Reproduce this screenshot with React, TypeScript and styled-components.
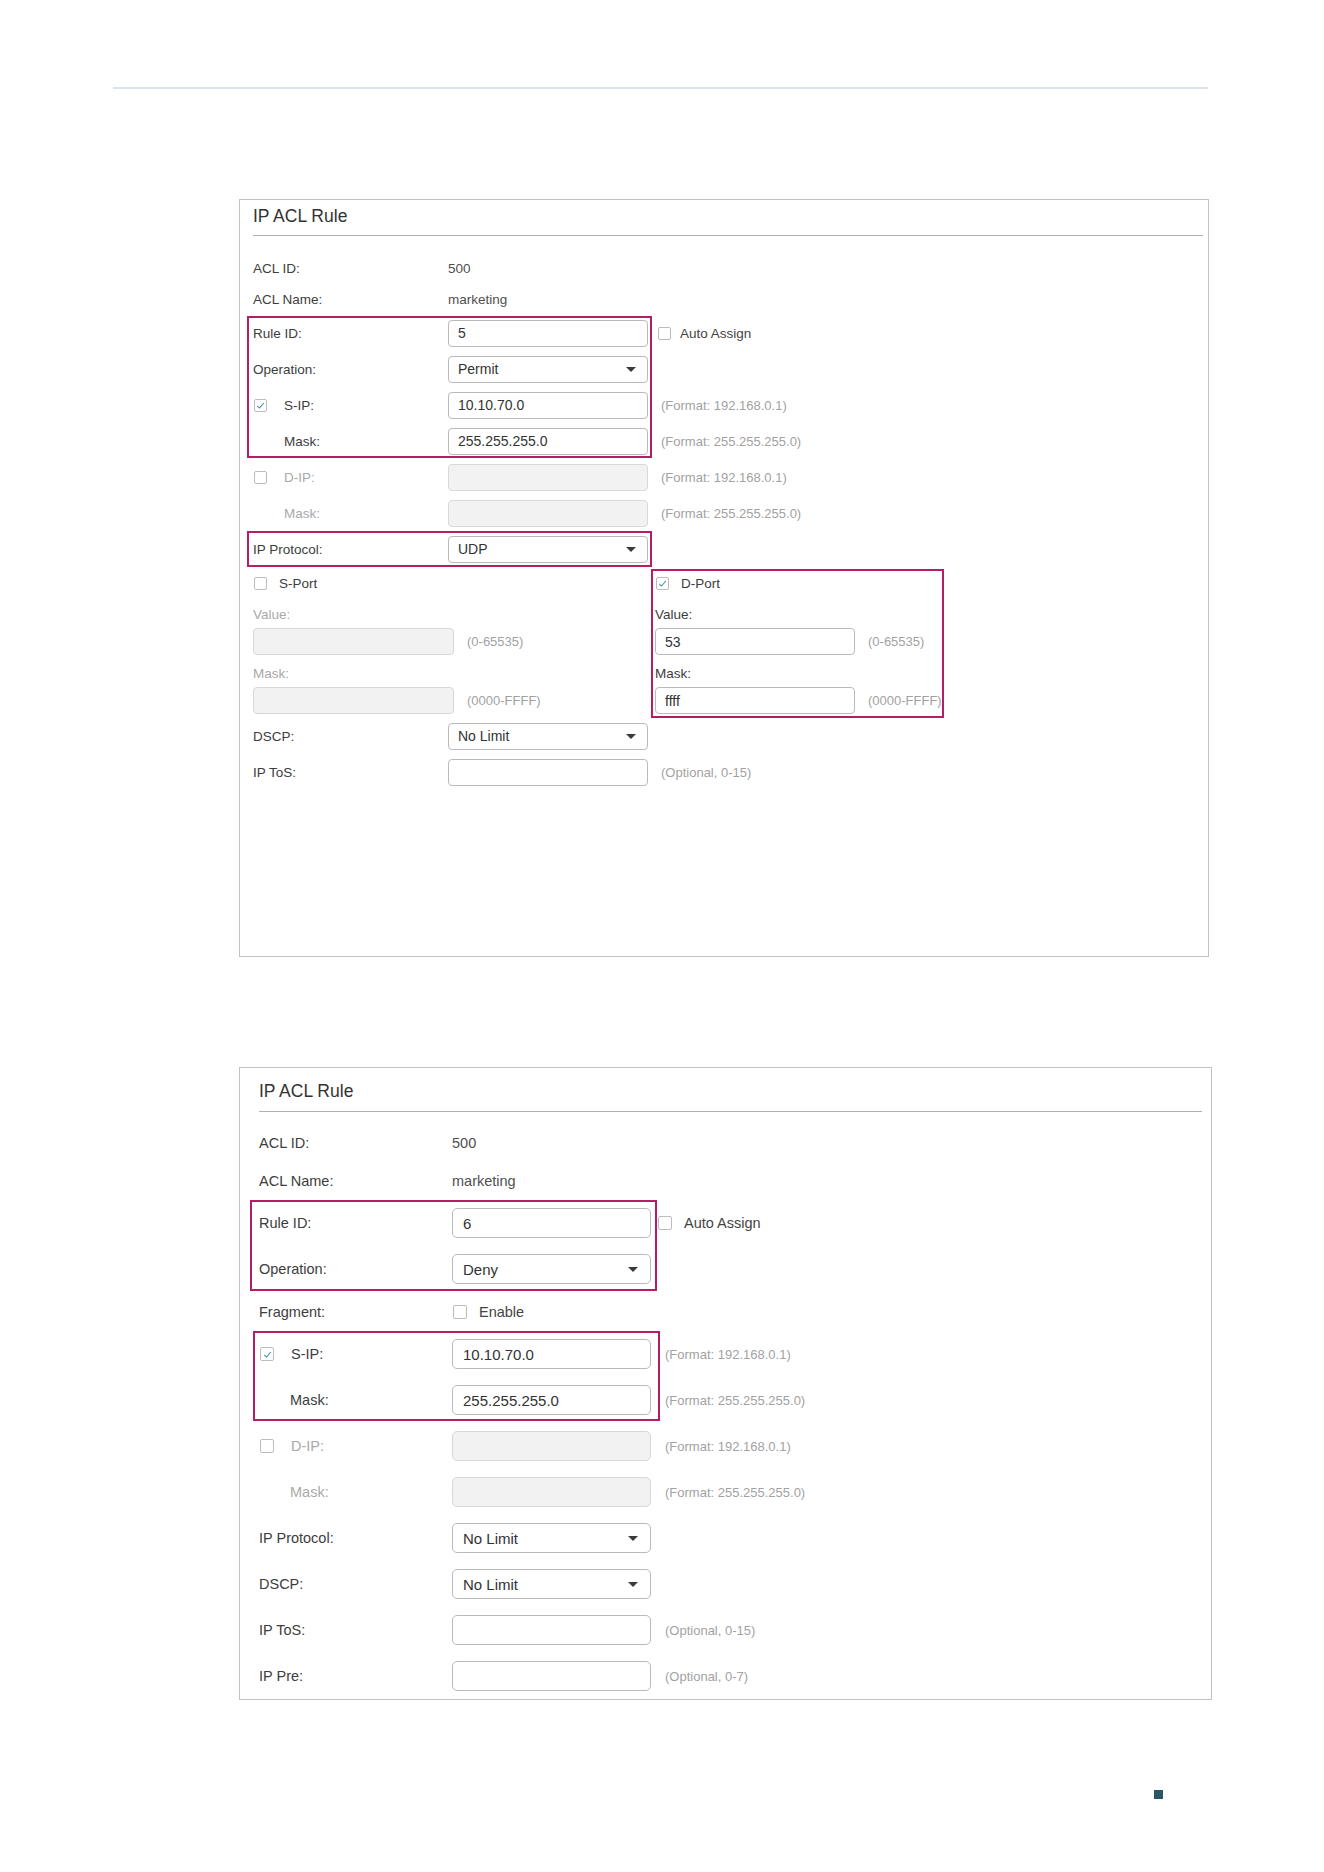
import React from "react";
import styled, { createGlobalStyle, ThemeProvider } from "styled-components";

type Metrics = {
  padLeft: number;
  headRight: number;
  headTop: number;
  headBottom: number;
  bodyTop: number;
  labelW: number;
  fieldW: number;
  rowH: number;
  infoH: number;
  fieldH: number;
  labelSize: number;
  valueSize: number;
  hintSize: number;
  hintGap: number;
  sideGap: number;
  sideTextGap: number;
  boxSize: number;
  indent: number;
  radius: number;
  fieldPad: number;
};

declare module "styled-components" {
  export interface DefaultTheme extends Metrics {}
}

const compact: Metrics = {
  padLeft: 13,
  headRight: 5,
  headTop: 6,
  headBottom: 9,
  bodyTop: 17,
  labelW: 195,
  fieldW: 200,
  rowH: 36,
  infoH: 30,
  fieldH: 27,
  labelSize: 13.5,
  valueSize: 14,
  hintSize: 13,
  hintGap: 13,
  sideGap: 9,
  sideTextGap: 9,
  boxSize: 13,
  indent: 31,
  radius: 4,
  fieldPad: 9,
};

const roomy: Metrics = {
  padLeft: 19,
  headRight: 9,
  headTop: 13,
  headBottom: 10,
  bodyTop: 12,
  labelW: 193,
  fieldW: 199,
  rowH: 46,
  infoH: 38,
  fieldH: 30,
  labelSize: 14.5,
  valueSize: 15,
  hintSize: 13,
  hintGap: 14,
  sideGap: 6,
  sideTextGap: 12,
  boxSize: 14,
  indent: 31,
  radius: 5,
  fieldPad: 10,
};

const MAGENTA = "#b71d64";

const GlobalStyle = createGlobalStyle`
  html, body {
    margin: 0;
    padding: 0;
    background: #ffffff;
  }
  body {
    font-family: "Liberation Sans", Arial, Helvetica, sans-serif;
    color: #333333;
  }
`;

const Page = styled.div`
  width: 1324px;
  min-height: 1872px;
  box-sizing: border-box;
  padding-top: 87px;
  display: flex;
  flex-direction: column;
`;

const HeaderRule = styled.div`
  height: 2px;
  margin: 0 116px 0 113px;
  background: #d9e5ea;
`;

const Card = styled.section<{ $top: number; $width: number; $height: number }>`
  margin: ${(p) => p.$top}px 0 0 239px;
  width: ${(p) => p.$width}px;
  height: ${(p) => p.$height}px;
  box-sizing: border-box;
  border: 1px solid #c2c2c2;
  background: #ffffff;
`;

const CardHead = styled.h2`
  margin: 0 ${(p) => p.theme.headRight}px 0 ${(p) => p.theme.padLeft}px;
  padding: ${(p) => p.theme.headTop}px 0 ${(p) => p.theme.headBottom}px;
  border-bottom: 1px solid #b0b0b0;
  font-size: 17.5px;
  font-weight: normal;
  line-height: 20px;
  color: #333333;
`;

const CardBody = styled.div`
  display: flex;
  flex-direction: column;
  padding: ${(p) => p.theme.bodyTop}px 0 0 ${(p) => p.theme.padLeft}px;
`;

const Row = styled.div<{ $h?: number }>`
  display: grid;
  grid-template-columns: ${(p) => p.theme.labelW}px ${(p) => p.theme.fieldW}px auto;
  align-items: center;
  height: ${(p) => p.$h ?? p.theme.rowH}px;
`;

const InfoLine = styled(Row)`
  height: ${(p) => p.$h ?? p.theme.infoH}px;
`;

const Label = styled.div<{ $muted?: boolean; $indent?: boolean }>`
  display: flex;
  align-items: center;
  padding-left: ${(p) => (p.$indent ? p.theme.indent : 0)}px;
  font-size: ${(p) => p.theme.labelSize}px;
  color: ${(p) => (p.$muted ? "#a9a9a9" : "#3d3d3d")};
  white-space: nowrap;
`;

const InfoValue = styled.div`
  font-size: ${(p) => p.theme.labelSize}px;
  color: #505050;
`;

const Field = styled.div<{ $disabled?: boolean; $width?: number }>`
  box-sizing: border-box;
  width: ${(p) => (p.$width ? `${p.$width}px` : "auto")};
  height: ${(p) => p.theme.fieldH}px;
  padding: 0 ${(p) => p.theme.fieldPad}px;
  display: flex;
  align-items: center;
  justify-content: space-between;
  border: 1px solid ${(p) => (p.$disabled ? "#d8d8d8" : "#bababa")};
  border-radius: ${(p) => p.theme.radius}px;
  background: ${(p) => (p.$disabled ? "#f2f2f2" : "#ffffff")};
  font-size: ${(p) => p.theme.valueSize}px;
  color: #333333;
`;

const Caret = styled.svg`
  flex: none;
  margin-right: 2px;
`;

const Hint = styled.span`
  margin-left: ${(p) => p.theme.hintGap}px;
  font-size: ${(p) => p.theme.hintSize}px;
  color: #a2a2a2;
  white-space: nowrap;
`;

const Side = styled.div<{ $flush?: boolean }>`
  display: flex;
  align-items: center;
  gap: ${(p) => p.theme.sideTextGap}px;
  margin-left: ${(p) => (p.$flush ? 0 : p.theme.sideGap)}px;
  font-size: ${(p) => p.theme.labelSize}px;
  color: #444444;
  white-space: nowrap;
`;

const Box = styled.span<{ $gap?: number }>`
  box-sizing: border-box;
  flex: none;
  width: ${(p) => p.theme.boxSize}px;
  height: ${(p) => p.theme.boxSize}px;
  margin-left: 1px;
  margin-right: ${(p) => p.$gap ?? 0}px;
  display: inline-flex;
  align-items: center;
  justify-content: center;
  border: 1px solid #bcbcbc;
  border-radius: 2px;
  background: #ffffff;
`;

const Highlight = styled.div<{ $left: number; $width: number; $top?: number; $bottom?: number }>`
  position: relative;
  &::after {
    content: "";
    position: absolute;
    top: ${(p) => p.$top ?? 0}px;
    bottom: ${(p) => p.$bottom ?? 0}px;
    left: ${(p) => p.$left}px;
    width: ${(p) => p.$width}px;
    box-sizing: border-box;
    border: 2px solid ${MAGENTA};
    pointer-events: none;
  }
`;

const PortSection = styled.div`
  display: flex;
  margin-left: -4px;
`;

const PortGroup = styled.div<{ $width: number; $marked?: boolean }>`
  box-sizing: border-box;
  width: ${(p) => p.$width}px;
  margin-top: 2px;
  padding: 0 0 2px 2px;
  border: 2px solid ${(p) => (p.$marked ? MAGENTA : "transparent")};
  display: flex;
  flex-direction: column;
`;

const PortHead = styled.div`
  height: 25px;
  display: flex;
  align-items: center;
  font-size: ${(p) => p.theme.labelSize}px;
  color: #3d3d3d;
`;

const PortLabel = styled.div<{ $muted?: boolean; $gap: number }>`
  margin-top: ${(p) => p.$gap}px;
  line-height: 16px;
  font-size: ${(p) => p.theme.labelSize}px;
  color: ${(p) => (p.$muted ? "#a9a9a9" : "#3d3d3d")};
`;

const PortLine = styled.div`
  margin-top: 5px;
  display: flex;
  align-items: center;
`;

const Footer = styled.div`
  margin: 90px 0 0 1154px;
  display: flex;
`;

const PageMark = styled.span`
  width: 9px;
  height: 9px;
  background: #2c5566;
`;

const Check = ({ checked, gap }: { checked?: boolean; gap?: number }) => (
  <Box $gap={gap}>
    {checked && (
      <svg width="9" height="9" viewBox="0 0 10 10">
        <path d="M1.4 5.3 L3.9 7.8 L8.7 2.2" fill="none" stroke="#3a8fb5" strokeWidth="1.2" />
      </svg>
    )}
  </Box>
);

const Select = ({ value }: { value: string }) => (
  <Field>
    {value}
    <Caret width="10" height="5" viewBox="0 0 10 5">
      <path d="M0 0 H10 L5 5 Z" fill="#3a3a3a" />
    </Caret>
  </Field>
);

const InfoRow = ({ label, value, h }: { label: string; value: string; h?: number }) => (
  <InfoLine $h={h}>
    <Label>{label}</Label>
    <InfoValue>{value}</InfoValue>
  </InfoLine>
);

type PortProps = {
  title: string;
  on: boolean;
  value: string;
  mask: string;
  width: number;
  marked?: boolean;
};

const PortBlock = ({ title, on, value, mask, width, marked }: PortProps) => (
  <PortGroup $width={width} $marked={marked}>
    <PortHead>
      <Check checked={on} gap={12} />
      {title}
    </PortHead>
    <PortLabel $muted={!on} $gap={11}>Value:</PortLabel>
    <PortLine>
      <Field $disabled={!on} $width={on ? 200 : 201}>{value}</Field>
      <Hint>(0-65535)</Hint>
    </PortLine>
    <PortLabel $muted={!on} $gap={11}>Mask:</PortLabel>
    <PortLine>
      <Field $disabled={!on} $width={on ? 200 : 201}>{mask}</Field>
      <Hint>(0000-FFFF)</Hint>
    </PortLine>
  </PortGroup>
);

const UdpRule = () => (
  <Card $top={110} $width={970} $height={758}>
    <ThemeProvider theme={compact}>
      <CardHead>IP ACL Rule</CardHead>
      <CardBody>
        <InfoRow label="ACL ID:" value="500" h={30} />
        <InfoRow label="ACL Name:" value="marketing" h={32} />
        <Highlight $left={-6} $width={405} $top={1} $bottom={1}>
          <Row>
            <Label>Rule ID:</Label>
            <Field>5</Field>
            <Side>
              <Check />
              Auto Assign
            </Side>
          </Row>
          <Row>
            <Label>Operation:</Label>
            <Select value="Permit" />
          </Row>
          <Row>
            <Label>
              <Check checked gap={17} />
              S-IP:
            </Label>
            <Field>10.10.70.0</Field>
            <Hint>(Format: 192.168.0.1)</Hint>
          </Row>
          <Row>
            <Label $indent>Mask:</Label>
            <Field>255.255.255.0</Field>
            <Hint>(Format: 255.255.255.0)</Hint>
          </Row>
        </Highlight>
        <Row>
          <Label $muted>
            <Check gap={17} />
            D-IP:
          </Label>
          <Field $disabled />
          <Hint>(Format: 192.168.0.1)</Hint>
        </Row>
        <Row>
          <Label $muted $indent>
            Mask:
          </Label>
          <Field $disabled />
          <Hint>(Format: 255.255.255.0)</Hint>
        </Row>
        <Highlight $left={-6} $width={405}>
          <Row>
            <Label>IP Protocol:</Label>
            <Select value="UDP" />
          </Row>
        </Highlight>
        <PortSection>
          <PortBlock title="S-Port" on={false} value="" mask="" width={402} />
          <PortBlock title="D-Port" on value="53" mask="ffff" width={293} marked />
        </PortSection>
        <Row>
          <Label>DSCP:</Label>
          <Select value="No Limit" />
        </Row>
        <Row>
          <Label>IP ToS:</Label>
          <Field />
          <Hint>(Optional, 0-15)</Hint>
        </Row>
      </CardBody>
    </ThemeProvider>
  </Card>
);

const DenyRule = () => (
  <Card $top={110} $width={973} $height={633}>
    <ThemeProvider theme={roomy}>
      <CardHead>IP ACL Rule</CardHead>
      <CardBody>
        <InfoRow label="ACL ID:" value="500" />
        <InfoRow label="ACL Name:" value="marketing" />
        <Highlight $left={-9} $width={407} $bottom={1}>
          <Row>
            <Label>Rule ID:</Label>
            <Field>6</Field>
            <Side>
              <Check />
              Auto Assign
            </Side>
          </Row>
          <Row>
            <Label>Operation:</Label>
            <Select value="Deny" />
          </Row>
        </Highlight>
        <Row $h={39}>
          <Label>Fragment:</Label>
          <Side $flush>
            <Check />
            Enable
          </Side>
        </Row>
        <Highlight $left={-6} $width={407} $bottom={2}>
          <Row>
            <Label>
              <Check checked gap={17} />
              S-IP:
            </Label>
            <Field>10.10.70.0</Field>
            <Hint>(Format: 192.168.0.1)</Hint>
          </Row>
          <Row>
            <Label $indent>Mask:</Label>
            <Field>255.255.255.0</Field>
            <Hint>(Format: 255.255.255.0)</Hint>
          </Row>
        </Highlight>
        <Row>
          <Label $muted>
            <Check gap={17} />
            D-IP:
          </Label>
          <Field $disabled />
          <Hint>(Format: 192.168.0.1)</Hint>
        </Row>
        <Row>
          <Label $muted $indent>
            Mask:
          </Label>
          <Field $disabled />
          <Hint>(Format: 255.255.255.0)</Hint>
        </Row>
        <Row>
          <Label>IP Protocol:</Label>
          <Select value="No Limit" />
        </Row>
        <Row>
          <Label>DSCP:</Label>
          <Select value="No Limit" />
        </Row>
        <Row>
          <Label>IP ToS:</Label>
          <Field />
          <Hint>(Optional, 0-15)</Hint>
        </Row>
        <Row>
          <Label>IP Pre:</Label>
          <Field />
          <Hint>(Optional, 0-7)</Hint>
        </Row>
      </CardBody>
    </ThemeProvider>
  </Card>
);

export default function App() {
  return (
    <>
      <GlobalStyle />
      <Page>
        <HeaderRule />
        <UdpRule />
        <DenyRule />
        <Footer>
          <PageMark />
        </Footer>
      </Page>
    </>
  );
}
